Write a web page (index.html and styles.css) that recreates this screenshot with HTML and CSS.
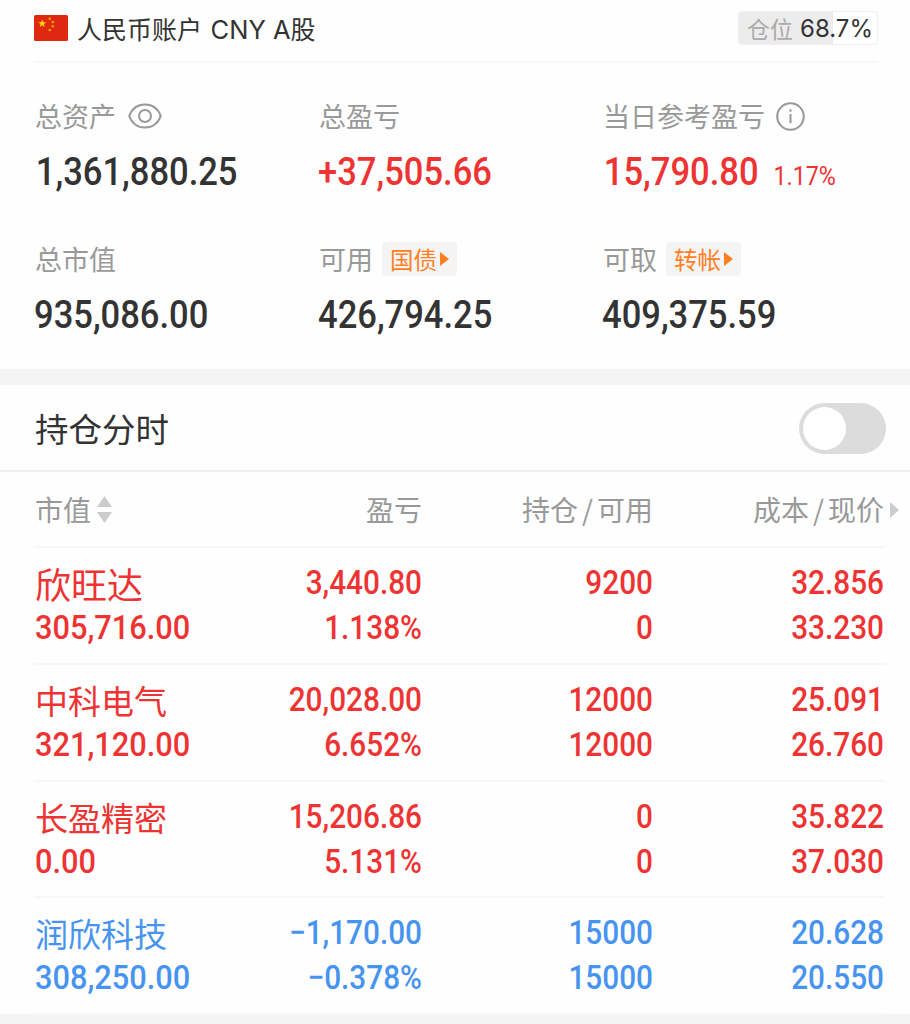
FILE: index.html
```html
<!DOCTYPE html>
<html lang="zh-CN">
<head>
    <meta charset="UTF-8">
    <meta name="viewport" content="width=device-width, initial-scale=1.0">
    <title>人民币账户</title>
    <link rel="stylesheet" href="styles.css">
</head>
<body>

    <!-- Account -->
    <div class="account">
        <div class="account-header">
            <svg class="flag" viewBox="0 0 34 26">
                <rect width="34" height="26" rx="1.5" fill="#de2910"/>
                <polygon fill="#ffde00" points="8.2,4.4 9.2,7.3 12.2,7.3 9.8,9.1 10.7,12 8.2,10.2 5.7,12 6.6,9.1 4.2,7.3 7.2,7.3"/>
                <g fill="#f0a000">
                    <circle cx="15.8" cy="3.8" r="1.3"/>
                    <circle cx="18.8" cy="7" r="1.3"/>
                    <circle cx="18.8" cy="11.3" r="1.3"/>
                    <circle cx="15.8" cy="15" r="1.3"/>
                </g>
            </svg>
            <div class="account-name">人民币账户 <span class="latin">CNY A</span>股</div>
            <div class="position"><span class="position-label">仓位</span><span class="latin">68.7%</span></div>
        </div>

        <div class="summary">
            <div class="stat">
                <div class="stat-label">总资产
                    <svg class="eye" viewBox="0 0 34 26" fill="none" stroke="#999" stroke-width="2">
                        <path d="M1.2 13C4 5.500 10 1.500 17 1.500S30 5.500 32.800 13C30 20.500 24 24.500 17 24.500S4 20.500 1.200 13Z"/>
                        <circle cx="17" cy="13" r="6"/>
                    </svg>
                </div>
                <div class="stat-value first">1,361,880.25</div>
            </div>
            <div class="stat">
                <div class="stat-label">总盈亏</div>
                <div class="stat-value up">+37,505.66</div>
            </div>
            <div class="stat">
                <div class="stat-label">当日参考盈亏
                    <svg class="info" viewBox="0 0 28 28" fill="none" stroke="#999" stroke-width="2">
                        <circle cx="14" cy="14" r="12.8"/>
                        <path d="M14 11.5V20.5M14 7V9.3"/>
                    </svg>
                </div>
                <div class="stat-value first up">15,790.80 <span class="percent">1.17%</span></div>
            </div>
            <div class="stat">
                <div class="stat-label">总市值</div>
                <div class="stat-value">935,086.00</div>
            </div>
            <div class="stat">
                <div class="stat-label">可用 <span class="tag">国债<i class="arrow"></i></span></div>
                <div class="stat-value">426,794.25</div>
            </div>
            <div class="stat">
                <div class="stat-label">可取 <span class="tag">转帐<i class="arrow"></i></span></div>
                <div class="stat-value">409,375.59</div>
            </div>
        </div>
    </div>

    <!-- Intraday switch -->
    <div class="switch-row">
        <span class="switch-title">持仓分时</span>
        <div class="switch"><div class="knob"></div></div>
    </div>

    <!-- Holdings -->
    <div class="holdings">
        <div class="row head">
            <div class="sortable">市值
                <svg class="sort" viewBox="0 0 15 27" fill="#ccc"><path d="M7.5 0L15 11H0ZM7.5 27L15 16H0Z"/></svg>
            </div>
            <div>盈亏</div>
            <div>持仓<b>/</b>可用</div>
            <div>成本<b>/</b>现价<i class="more"></i></div>
        </div>
        <div class="row up">
            <div><p class="name short">欣旺达</p><p>305,716.00</p></div>
            <div><p>3,440.80</p><p>1.138%</p></div>
            <div><p>9200</p><p>0</p></div>
            <div><p>32.856</p><p>33.230</p></div>
        </div>
        <div class="row up">
            <div><p class="name">中科电气</p><p>321,120.00</p></div>
            <div><p>20,028.00</p><p>6.652%</p></div>
            <div><p>12000</p><p>12000</p></div>
            <div><p>25.091</p><p>26.760</p></div>
        </div>
        <div class="row up">
            <div><p class="name">长盈精密</p><p>0.00</p></div>
            <div><p>15,206.86</p><p>5.131%</p></div>
            <div><p>0</p><p>0</p></div>
            <div><p>35.822</p><p>37.030</p></div>
        </div>
        <div class="row down">
            <div><p class="name">润欣科技</p><p>308,250.00</p></div>
            <div><p>−1,170.00</p><p>−0.378%</p></div>
            <div><p>15000</p><p>15000</p></div>
            <div><p>20.628</p><p>20.550</p></div>
        </div>
    </div>

</body>
</html>
```
FILE: styles.css
```css
* {
    box-sizing: border-box;
}
body {
    font-family: "Noto Sans CJK SC", sans-serif;
    margin: 0;
    height: 1024px;
    overflow: hidden;
    background-color: #f4f4f4;
    color: #333;
}
p {
    margin: 0;
}
.latin {
    font-family: Inter, sans-serif;
}
.account {
    height: 369px;
    padding: 0 32px 0 34px;
    background: #fefefe;
}
.account-header {
    display: flex;
    align-items: center;
    height: 63px;
    padding-bottom: 5px;
    border-bottom: 2px solid #f7f7f7;
}
.flag {
    width: 34px;
    height: 26px;
}
.account-name {
    flex: 1;
    margin-left: 9px;
    font-size: 25px;
    white-space: nowrap;
}
.account-name .latin {
    margin-left: 3px;
    font-size: 25.5px;
}
.position {
    display: flex;
    align-items: center;
    justify-content: space-between;
    width: 140px;
    height: 34px;
    padding: 0 4px 0 8px;
    border: 1px solid #f0f0f0;
    border-radius: 4px;
    background: linear-gradient(to right, #ececec 68%, #fff 68%);
    font-size: 24px;
}
.position-label {
    font-size: 23px;
    color: #aaa;
}
.summary {
    display: grid;
    grid-template-columns: 284px 284px auto;
    grid-auto-rows: 143px;
    padding-top: 31px;
}
.stat-label {
    display: flex;
    align-items: center;
    height: 44px;
    padding-left: 1px;
    line-height: 40px;
    font-size: 27px;
    color: #999;
}
.eye {
    width: 34px;
    height: 26px;
    margin-left: 12px;
}
.info {
    width: 29px;
    height: 29px;
    margin-left: 11px;
}
.tag {
    display: flex;
    align-items: center;
    height: 34px;
    margin-left: 9px;
    padding: 0 8px;
    border-radius: 4px;
    background: #f4f4f4;
    font-size: 23.5px;
    color: #ff7f1e;
}
.arrow {
    margin-left: 3px;
    border-left: 9px solid #ff7f1e;
    border-top: 7px solid transparent;
    border-bottom: 7px solid transparent;
}
/* figures are set narrower than the font's own width */
.stat-value {
    height: 67px;
    line-height: 67px;
    font-family: Roboto, sans-serif;
    font-size: 38.5px;
    font-weight: 500;
    white-space: nowrap;
    transform: scaleX(0.897);
    transform-origin: left;
}
.stat-value.first {
    padding-left: 2px;
}
.percent {
    margin-left: 7px;
    font-size: 26px;
    font-weight: 400;
}
.up {
    color: #ee3333;
}
.down {
    color: #4794f0;
}
.switch-row {
    display: flex;
    align-items: center;
    justify-content: space-between;
    height: 87px;
    margin-top: 16px;
    padding: 1px 24px 0 35px;
    border-bottom: 2px solid #efefef;
    background: #fefefe;
    font-size: 33.5px;
}
.switch-title {
    padding-bottom: 2px;
}
.switch {
    width: 87px;
    height: 51px;
    padding: 4px;
    border-radius: 26px;
    background: #dcdcdc;
}
.knob {
    width: 43px;
    height: 43px;
    border-radius: 50%;
    background: #fff;
}
.holdings {
    height: 542px;
    padding: 0 25px 0 34px;
    background: #fefefe;
}
.row {
    display: grid;
    grid-template-columns: 187px 200px 231px 1fr;
    height: 116.75px;
    padding: 12px 1px 0;
    border-bottom: 2px solid #f7f7f7;
    text-align: right;
    font-family: Roboto, "Noto Sans CJK SC", sans-serif;
    font-size: 34px;
    font-weight: 500;
}
.row p {
    height: 45px;
    line-height: 45px;
    white-space: nowrap;
    transform: scaleX(0.875);
    transform-origin: right;
}
.row div:first-child {
    text-align: left;
}
.row div:first-child p {
    transform: scaleX(0.905);
    transform-origin: left;
}
.row div:first-child .name {
    font-family: "Noto Sans CJK SC", sans-serif;
    font-size: 33px;
    font-weight: 400;
    line-height: 47px;
    transform: none;
}
.row div:first-child .short {
    font-size: 36px;
}
.row.head {
    height: 76px;
    padding-top: 0;
    line-height: 75px;
    font-family: "Noto Sans CJK SC", sans-serif;
    font-size: 28px;
    font-weight: 400;
    color: #999;
}
.head b {
    margin: 0 4px;
    font-weight: 400;
}
.sortable {
    display: flex;
    align-items: center;
}
.sort {
    width: 15px;
    height: 27px;
    margin-left: 6px;
}
.more {
    display: inline-block;
    margin: 0 -15px 3px 6px;
    border-left: 9px solid #ccc;
    border-top: 8px solid transparent;
    border-bottom: 8px solid transparent;
}
```
